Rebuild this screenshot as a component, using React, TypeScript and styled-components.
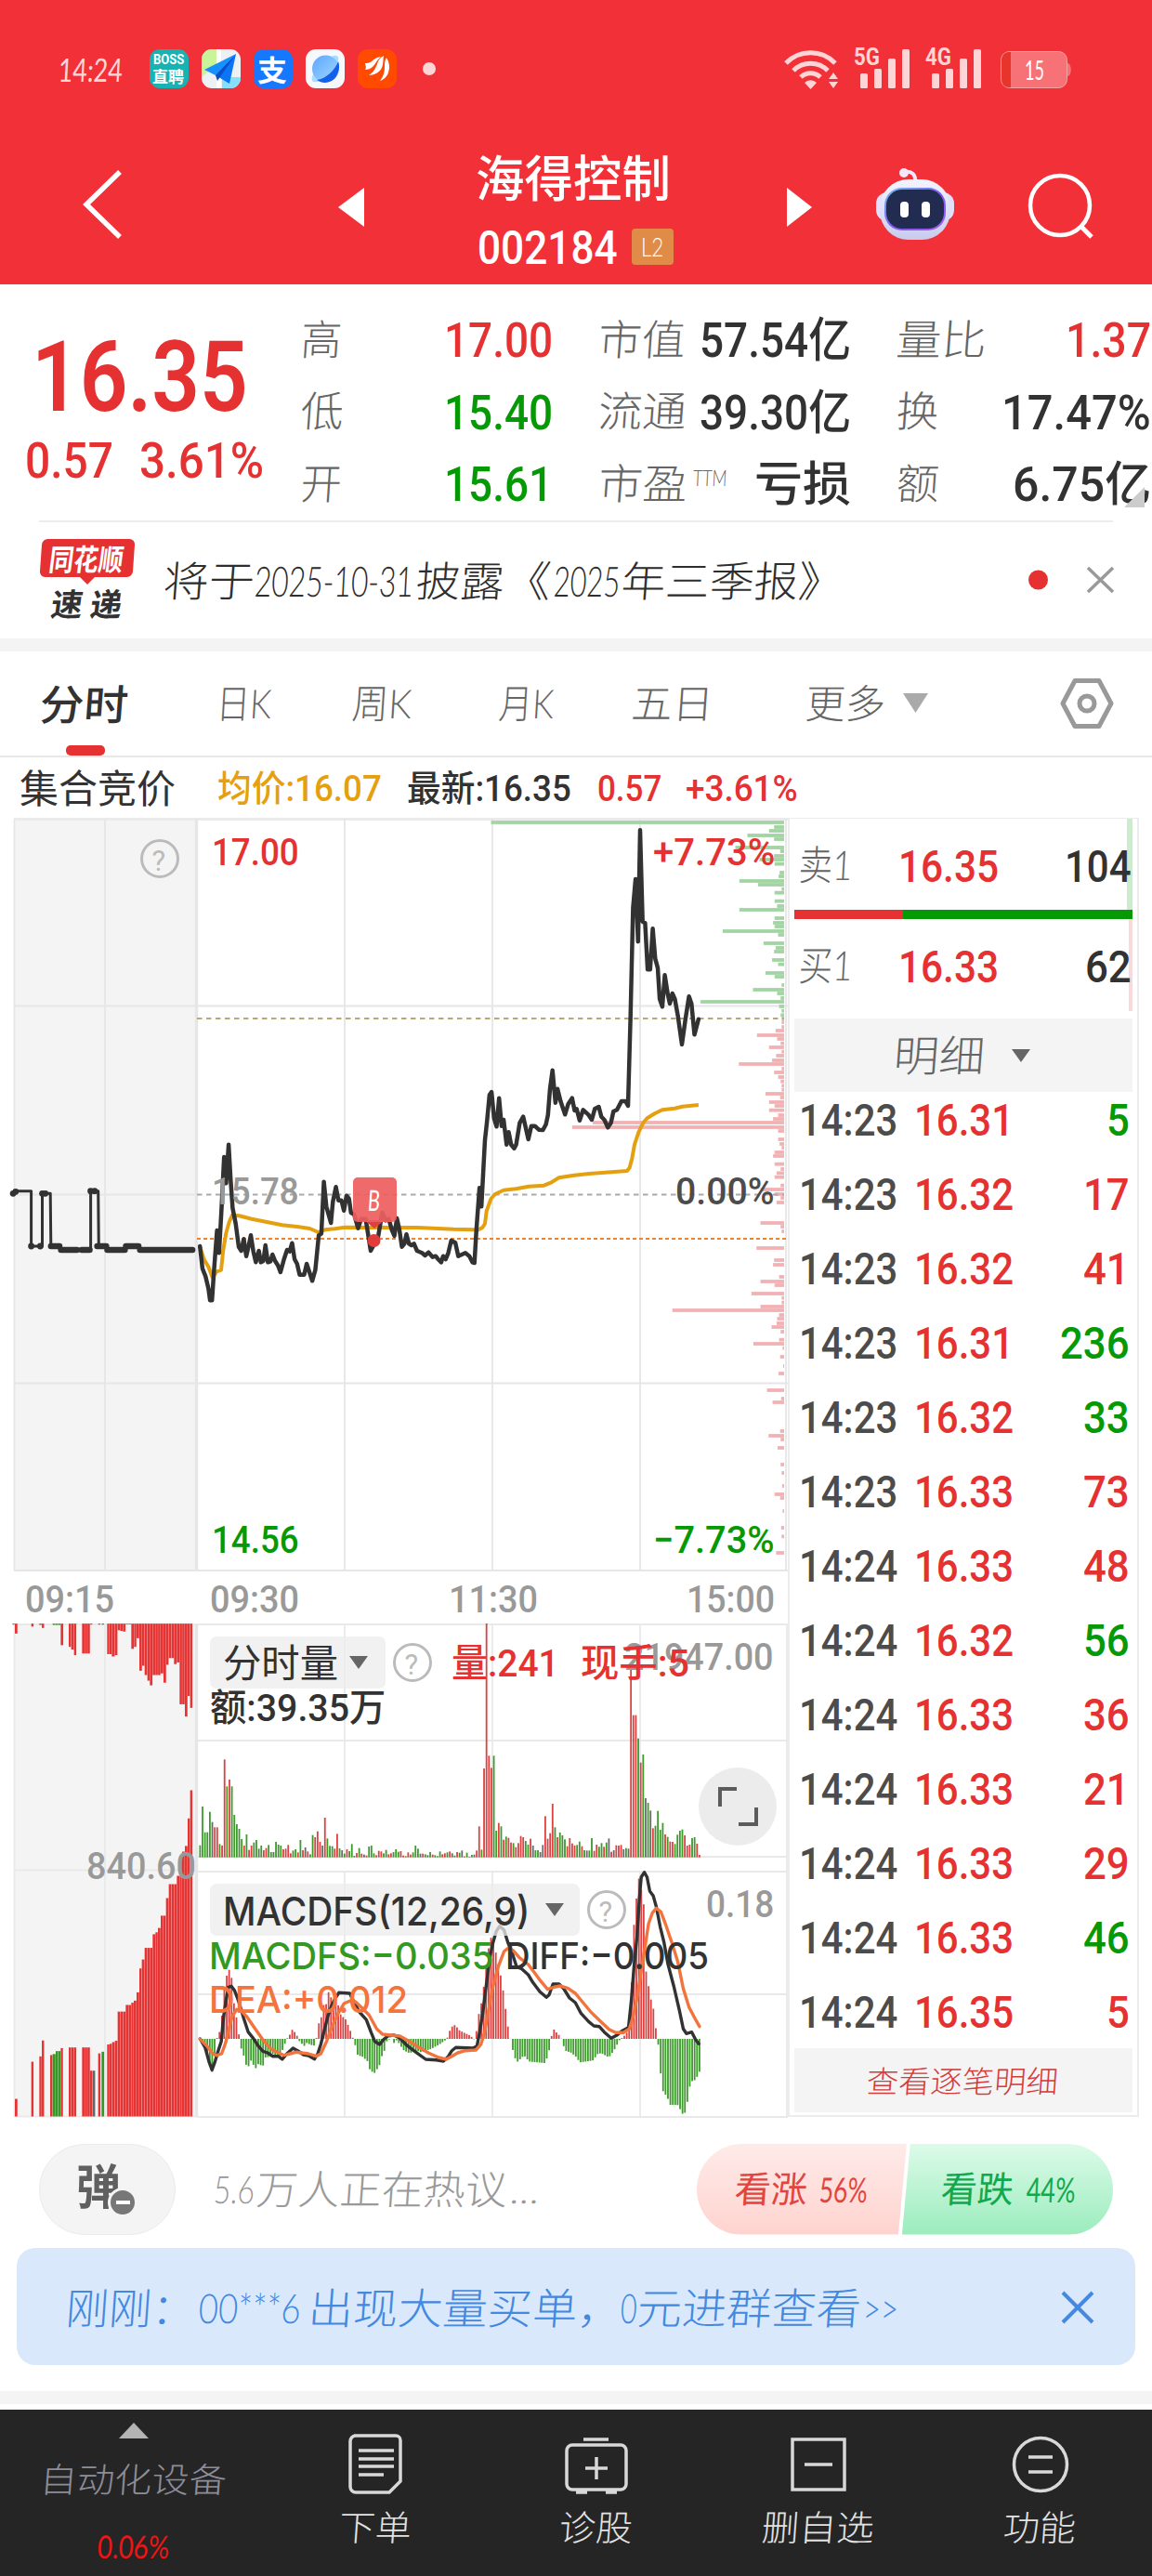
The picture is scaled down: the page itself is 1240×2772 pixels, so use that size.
import React, { useLayoutEffect, useRef } from "react";
import styled, { createGlobalStyle, css } from "styled-components";

const RED = "#e53131";
const GREEN = "#059905";
const INK = "#323232";
const GREY = "#999999";

const Global = createGlobalStyle`
  html, body { margin: 0; padding: 0; background: #fff; }
  * { box-sizing: border-box; }
  svg { display: block; flex: none; }
`;

const faces = {
  num: `Roboto, "Noto Sans CJK SC", sans-serif`,
  thin: `Lato, "Noto Sans CJK SC", sans-serif`,
  latin: `Inter, "Noto Sans CJK SC", sans-serif`,
};

/* ---------- text that is set to an exact measure ---------- */

type TextProps = {
  w: number;
  size: number;
  color?: string;
  weight?: number;
  face?: keyof typeof faces;
  ml?: number;
  slant?: number;
  children: React.ReactNode;
};

const Slot = styled.span<{ $w: number; $ml: number; $size: number; $color: string; $weight: number; $face: string }>`
  display: inline-block;
  flex: none;
  width: ${(p) => p.$w}px;
  margin-left: ${(p) => p.$ml}px;
  height: ${(p) => Math.round(p.$size * 1.2)}px;
  line-height: ${(p) => Math.round(p.$size * 1.2)}px;
  font-family: ${(p) => p.$face};
  font-size: ${(p) => p.$size}px;
  font-weight: ${(p) => p.$weight};
  color: ${(p) => p.$color};
  white-space: pre;
`;

const Ink = styled.span`
  display: inline-block;
  transform-origin: 0 50%;
`;

function Text({ w, size, color = INK, weight = 500, face = "num", ml = 0, slant = 0, children }: TextProps) {
  const ref = useRef<HTMLSpanElement>(null);
  const drop = face === "thin" ? 0 : size > 20 ? 1.5 : 0;
  useLayoutEffect(() => {
    const el = ref.current;
    if (!el) return;
    const fit = () => {
      if (el.offsetWidth) el.style.transform = `translate(-1px, ${drop}px) scaleX(${w / el.offsetWidth}) skewX(${-slant}deg)`;
    };
    fit();
    document.fonts?.ready.then(fit);
  }, [w, slant, drop, children]);
  return (
    <Slot $w={w} $ml={ml} $size={size} $color={color} $weight={weight} $face={faces[face]}>
      <Ink ref={ref}>{children}</Ink>
    </Slot>
  );
}

const Pen = (p: TextProps) => <Text weight={300} face="thin" color="#666" slant={4} {...p} />;

/* ---------- shell ---------- */

const Page = styled.main`
  width: 1240px;
  height: 2772px;
  overflow: hidden;
  display: flex;
  flex-direction: column;
  background: #fff;
`;

const Row = styled.div<{ $h: number; $pl?: number }>`
  display: flex;
  align-items: center;
  flex: none;
  height: ${(p) => p.$h}px;
  padding-left: ${(p) => p.$pl ?? 0}px;
`;

const Header = styled.header`
  height: 306px;
  flex: none;
  background: #f23037;
  border-bottom: 1px solid #c9484c;
`;

const Band = styled.div`
  height: 14px;
  flex: none;
  background: #f4f4f4;
`;

/* ---------- status bar ---------- */

const AppIcon = styled.span<{ $bg: string; $ml?: number }>`
  flex: none;
  width: 42px;
  height: 42px;
  margin-left: ${(p) => p.$ml ?? 14}px;
  border-radius: 11px;
  background: ${(p) => p.$bg};
  overflow: hidden;
  display: flex;
  flex-direction: column;
  align-items: center;
  justify-content: center;
`;

const Spacer = styled.span`
  flex: 1;
`;

const Dot = styled.span<{ $r: number; $color: string; $ml: number }>`
  flex: none;
  width: ${(p) => p.$r * 2}px;
  height: ${(p) => p.$r * 2}px;
  margin-left: ${(p) => p.$ml}px;
  border-radius: 50%;
  background: ${(p) => p.$color};
`;

function StatusBar() {
  const c = "#fdd5d6";
  return (
    <Row $h={148} $pl={64}>
      <Pen w={69} size={35} color={c} weight={400}>14:24</Pen>
      <AppIcon $bg="#17b3b3" $ml={28}>
        <Text w={33} size={15} color="#fff" weight={700}>BOSS</Text>
        <Text w={34} size={17} color="#fff" weight={700}>直聘</Text>
      </AppIcon>
      <AppIcon $bg="#eef1f3">
        <svg width="42" height="42" viewBox="0 0 42 42">
          <path d="M0 0H16V17L0 30Z" fill="#c8f59a" />
          <path d="M16 0h5v14l-5 3Z" fill="#fff" />
          <path d="M22 30H42V42H22Z" fill="#86e0fb" />
          <path d="M16 28h5v14h-5Z" fill="#fff" />
          <path d="M37 5 3 22l12 6Z" fill="#1590ff" />
          <path d="M37 5 15 28l15 9Z" fill="#0a75f5" />
          <path d="M37 5 15 28l2 6Z" fill="#0a4fc8" />
        </svg>
      </AppIcon>
      <AppIcon $bg="#1677ff">
        <Text w={32} size={31} color="#fff" weight={700}>支</Text>
      </AppIcon>
      <AppIcon $bg="#f6f8fb">
        <svg width="42" height="42" viewBox="0 0 42 42">
          <defs>
            <linearGradient id="orb" x1="0" y1="0" x2="1" y2="1">
              <stop offset="0" stopColor="#5fa4ff" />
              <stop offset="1" stopColor="#9fdcff" />
            </linearGradient>
          </defs>
          <ellipse cx="21" cy="21" rx="19" ry="7" transform="rotate(-45 21 21)" fill="#a9dcfb" />
          <circle cx="21.500" cy="21" r="14.500" fill="url(#orb)" />
          <path d="M35 13C32 22 22 32 12 33c8 6 19 2 22-6 2-4 3-9 1-14Z" fill="#1560ea" />
        </svg>
      </AppIcon>
      <AppIcon $bg="#ff4a00">
        <svg width="42" height="42" viewBox="0 0 42 42" fill="#fff">
          <path d="M8 15c5 0 7-2 11-5 2-1 4-2 6-2-4 3-5 7-8 10s-6 4-9 4c2-3 0-5 0-7Z" />
          <path d="M12 28c5-3 7-7 9-12 1-4 3-7 7-9-1 5 0 8-2 13-2 4-7 8-14 8Z" />
          <path d="M24 34c4-5 5-10 5-15 0-4 0-7 2-10 3 5 4 10 2 16-1 4-5 8-9 9Z" />
        </svg>
      </AppIcon>
      <Dot $r={7} $color={c} $ml={28} />
      <Spacer />
      <svg width="400" height="148" viewBox="840 0 400 148" fill={c}>
        <g fill="none" stroke={c} strokeWidth="5">
          <path d="M846 68a37 37 0 0 1 53 0" />
          <path d="M854 76a26 26 0 0 1 37 0" />
          <path d="M862 83a15 15 0 0 1 21 0" />
        </g>
        <path d="M866 89a9 9 0 0 1 13 0L872.500 96Z" />
        <path d="M892 85l5-7 5 7ZM892 88l5 7 5-7Z" />
        {[0, 77].map((dx) =>
          [16, 21, 32, 42].map((h, i) => (
            <rect key={dx + i} x={926 + dx + i * 15} y={95 - h} width="8" height={h} rx="1.500" />
          )),
        )}
        <g fontFamily="Roboto" fontWeight="700" fontSize="25">
          <text x="919" y="70" textLength="28" lengthAdjust="spacingAndGlyphs">5G</text>
          <text x="996" y="70" textLength="28" lengthAdjust="spacingAndGlyphs">4G</text>
        </g>
        <rect x="1077.500" y="55.500" width="71" height="39" rx="9" fill="#f77277" stroke="#f9a0a2" />
        <path d="M1088 56v38h-2c-5 0-8-4-8-9V65c0-5 3-9 8-9Z" fill="#e8352c" />
        <path d="M1149 68c5 0 5 14 0 14Z" fill="#f77277" />
        <text x="1103" y="86" fontFamily="Lato" fontWeight="400" fontSize="29" fill="#fff" textLength="21" lengthAdjust="spacingAndGlyphs">15</text>
      </svg>
    </Row>
  );
}

/* ---------- title bar ---------- */

const TitleBlock = styled.div`
  width: 212px;
  margin-left: 121px;
  padding-top: 3px;
  display: flex;
  flex-direction: column;
`;

const LevelTag = styled.span`
  width: 45px;
  height: 39px;
  margin-left: 14px;
  border-radius: 4px;
  background: #e08c48;
  display: flex;
  align-items: center;
  justify-content: center;
`;

function TitleBar() {
  return (
    <Row $h={157}>
      <svg width="392" height="157" viewBox="0 148 392 157">
        <path d="M129 185 93 220l36 35" fill="none" stroke="#fff" strokeWidth="5.500" />
        <path d="M392 202v42l-28-21Z" fill="#fff" />
      </svg>
      <TitleBlock>
        <Row $h={74}>
          <Text w={210} size={53} color="#fff" weight={500} face="latin">海得控制</Text>
        </Row>
        <Row $h={74}>
          <Text w={151} size={50} color="#fff" weight={500} ml={2}>002184</Text>
          <LevelTag>
            <Text w={24} size={28} color="#fff" weight={300} face="thin">L2</Text>
          </LevelTag>
        </Row>
      </TitleBlock>
      <Spacer />
      <svg width="400" height="157" viewBox="840 148 400 157">
        <defs>
          <linearGradient id="helm" x1="0" y1="0" x2="0" y2="1">
            <stop offset="0" stopColor="#f4f4ff" />
            <stop offset="1" stopColor="#c9cbee" />
          </linearGradient>
          <linearGradient id="visor" x1="0" y1="0" x2="1" y2="1">
            <stop offset="0" stopColor="#6fc3ee" />
            <stop offset=".5" stopColor="#7a5af0" />
            <stop offset="1" stopColor="#a55cf5" />
          </linearGradient>
        </defs>
        <path d="M847 202v42l27-21Z" fill="#fff" />
        <path d="M985 196c1-9-4-12-12-11" fill="none" stroke="#efeaff" strokeWidth="4" />
        <circle cx="973" cy="186" r="5" fill="#f2e8fa" />
        <rect x="943" y="207" width="84" height="31" rx="12" fill="#e3dffa" />
        <rect x="947" y="193" width="76" height="65" rx="31" fill="url(#helm)" />
        <rect x="952" y="202" width="66" height="46" rx="19" fill="url(#visor)" />
        <rect x="954" y="204" width="62" height="42" rx="17" fill="#222b50" />
        <rect x="969" y="217" width="9" height="17" rx="4" fill="#fff" />
        <rect x="992" y="217" width="9" height="17" rx="4" fill="#fff" />
        <circle cx="1141" cy="221" r="32" fill="none" stroke="#fff" strokeWidth="4.500" />
        <path d="M1163 243l12 12" stroke="#fff" strokeWidth="5" />
      </svg>
    </Row>
  );
}

/* ---------- quote ---------- */

const Quote = styled.section`
  position: relative;
  height: 254px;
  flex: none;
  padding-top: 20px;
  display: flex;
`;

const QuoteMain = styled.div`
  width: 325px;
  padding-top: 18px;
`;

const QuoteGrid = styled.div`
  display: grid;
  grid-template-columns: 271px 272px 274px;
  grid-auto-rows: 77.5px;
  column-gap: 49px;
`;

const Cell = styled.div`
  display: flex;
  align-items: center;
  justify-content: space-between;
`;

const Super = styled.span`
  display: flex;
  margin-bottom: 12px;
`;

const Corner = styled.span`
  position: absolute;
  right: 8px;
  bottom: 14px;
  border-left: 22px solid transparent;
  border-bottom: 22px solid #ccc;
`;

const Divider = styled.div`
  height: 2px;
  flex: none;
  margin: 0 42px;
  background: #ececec;
`;

const cells: [string, number, string, number, string][] = [
  ["高", 44, "17.00", 117, RED],
  ["市值", 94, "57.54亿", 163, INK],
  ["量比", 97, "1.37", 92, RED],
  ["低", 46, "15.40", 117, GREEN],
  ["流通", 95, "39.30亿", 163, INK],
  ["换", 46, "17.47%", 161, INK],
  ["开", 44, "15.61", 117, GREEN],
  ["市盈", 96, "亏损", 104, INK],
  ["额", 46, "6.75亿", 149, INK],
];

function QuotePanel() {
  return (
    <>
      <Quote>
        <QuoteMain>
          <Row $h={121} $pl={35}>
            <Text w={233} size={105} color={RED} weight={600}>16.35</Text>
          </Row>
          <Row $h={58} $pl={28}>
            <Text w={95} size={53} color={RED}>0.57</Text>
            <Text w={134} size={53} color={RED} ml={28}>3.61%</Text>
          </Row>
        </QuoteMain>
        <QuoteGrid>
          {cells.map(([k, kw, v, vw, c]) => (
            <Cell key={k}>
              <Pen w={kw} size={45}>{k}</Pen>
              {k === "市盈" && (
                <Super>
                  <Pen w={37} size={24} ml={-24}>TTM</Pen>
                </Super>
              )}
              <Text w={vw} size={51} color={c}>{v}</Text>
            </Cell>
          ))}
        </QuoteGrid>
        <Corner />
      </Quote>
      <Divider />
    </>
  );
}

/* ---------- news ---------- */

const NewsLogo = styled.div`
  width: 104px;
  height: 90px;
  display: flex;
  flex-direction: column;
  align-items: center;
`;

const LogoTop = styled.div`
  width: 100px;
  height: 43px;
  border-radius: 6px;
  background: ${RED};
  transform: skewX(-4deg);
  display: flex;
  align-items: center;
  justify-content: center;
`;

const LogoTip = styled.div`
  border: 8px solid transparent;
  border-top-color: ${RED};
  border-bottom: 0;
`;

function News() {
  const ink = "#2e2e2e";
  return (
    <Row $h={125} $pl={42}>
      <NewsLogo>
        <LogoTop>
          <Text w={80} size={32} color="#fff" weight={700} slant={4}>同花顺</Text>
        </LogoTop>
        <LogoTip />
        <Text w={76} size={34} weight={700} slant={8}>速 递</Text>
      </NewsLogo>
      <Pen w={98} size={45} ml={31} color={ink}>将于</Pen>
      <Pen w={171} size={45} color={ink}>2025-10-31</Pen>
      <Pen w={95} size={45} ml={3} color={ink}>披露</Pen>
      <Pen w={50} size={45} color={ink}>《</Pen>
      <Pen w={71} size={45} color={ink} ml={3}>2025</Pen>
      <Pen w={238} size={45} color={ink} ml={2}>年三季报》</Pen>
      <Spacer />
      <svg width="140" height="125" viewBox="1100 562 140 125">
        <circle cx="1117.500" cy="624" r="10.500" fill={RED} />
        <path d="M1171 611l27 26M1198 611l-27 26" stroke="#999" strokeWidth="3.500" />
      </svg>
    </Row>
  );
}

/* ---------- tabs ---------- */

const Tabs = styled.nav`
  height: 114px;
  flex: none;
  padding-left: 44px;
  display: flex;
  border-bottom: 2px solid #e8e8e8;
`;

const Tab = styled.div<{ $ml?: number; $on?: boolean }>`
  display: flex;
  flex-direction: column;
  align-items: center;
  justify-content: space-between;
  padding-top: 30px;
  margin-left: ${(p) => p.$ml ?? 0}px;
  ${(p) =>
    p.$on &&
    css`
      &::after {
        content: "";
        width: 42px;
        height: 11px;
        border-radius: 5px;
        background: ${RED};
      }
    `}
`;

function TabBar() {
  return (
    <Tabs>
      <Tab $on>
        <Text w={95} size={45} weight={500} face="thin" slant={4}>分时</Text>
      </Tab>
      <Tab $ml={95}><Pen w={59} size={43}>日K</Pen></Tab>
      <Tab $ml={87}><Pen w={64} size={43}>周K</Pen></Tab>
      <Tab $ml={94}><Pen w={59} size={43}>月K</Pen></Tab>
      <Tab $ml={84}><Pen w={88} size={43}>五日</Pen></Tab>
      <Tab $ml={99}><Pen w={86} size={43}>更多</Pen></Tab>
      <Spacer />
      <svg width="280" height="112" viewBox="960 701 280 112">
        <path d="M972 746h27l-13.500 21Z" fill="#aaa" />
        <path d="M1157 732.500h26l13 24.500-13 24.500h-26L1144 757Z" fill="none" stroke="#999" strokeWidth="5" strokeLinejoin="round" />
        <circle cx="1170" cy="757" r="8" fill="none" stroke="#999" strokeWidth="5" />
      </svg>
    </Tabs>
  );
}

const KX = 1 / 1.8447;
const px = (x: number) => x * KX;
const py = (y: number) => 860 + y / 3;
const toPath = (s: string, fx: (n: number) => number, fy: (n: number) => number) =>
  "M" +
  s
    .trim()
    .split(/\s+/)
    .map((p) => {
      const [x, y] = p.split(",").map(Number);
      return `${fx(x).toFixed(1)} ${fy(y).toFixed(1)}`;
    })
    .join("L");

const PRICE_AM = `397,303 402,375 408,400 414,440 417,478 421,478 425,380 431,252 435,325 440,180 445,15 449,100 454,-25 458,90 462,180 468,230 474,305 479,318 484,280 489,335 494,300 498,268 503,320 508,355 514,318 518,355 523,350 527,300 532,355 537,352 541,330 546,350 552,365 557,387 564,345 570,315 575,320 580,293 585,345 590,360 595,395 604,395 609,360 615,390 620,415 626,380 633,268 638,262 643,95 648,175 657,228 661,160 667,112 672,155 678,155 683,188 688,140 693,150 697,195 703,200 711,245 717,215 726,215 736,318 742,300 750,280 759,195 766,220 772,215 778,250 783,270 788,213 793,250 798,305 803,295 807,265 812,295 817,300 822,295 828,318 838,325 844,333 851,323 859,338 865,335 870,345 876,355 880,335 885,345 890,325 896,285 904,292 910,335 917,330 924,325 932,335 938,355 942,357 946,250 952,115 956,175 960,50 963,-40 967,-100 972,-185 976,-195 981,-110 986,-83 991,-175 996,-85 1000,-105 1006,-25 1010,-65 1015,-25 1021,-13 1025,-25 1032,-95 1039,-115 1049,-42 1055,-85 1062,-85 1070,-73 1078,-72 1084,-90 1088,-120 1092,-205 1097,-265 1103,-160 1107,-205 1113,-165 1122,-122 1128,-155 1136,-175 1141,-135 1145,-140 1151,-103 1158,-137 1168,-122 1175,-105 1181,-140 1189,-147 1194,-115 1200,-105 1207,-80 1213,-95 1218,-132 1225,-137 1234,-165 1242,-165 1247,-150 1252,-440 1257,-790 1262,-882 1267,-680 1271,-1040 1276,-745 1281,-740 1286,-590 1291,-590 1296,-722 1301,-625 1306,-595 1310,-495 1315,-470 1320,-572 1326,-510 1330,-480 1335,-513 1340,-495 1346,-440 1354,-348 1361,-430 1368,-503 1373,-480 1379,-380 1387,-430`;
const AVERAGE = `397,305 405,345 414,370 422,405 430,385 439,380 443,320 449,260 455,225 461,203 475,205 500,215 530,225 560,235 590,240 615,246 632,258 645,250 665,247 685,242 830,243 900,248 950,250 958,243 963,230 966,190 975,150 983,135 1000,122 1025,118 1050,110 1080,107 1095,97 1110,82 1140,74 1170,69 1245,60 1250,50 1255,20 1260,-25 1268,-65 1277,-95 1285,-110 1300,-125 1315,-137 1340,-142 1355,-148 1387,-153`;
const AUCTION = `26,133 31,125 62,125 62,303 84,303 84,133 100,133 101,303 120,303 122,315 180,315 180,125 195,125 196,303 211,303 213,315 248,315 248,303 277,303 280,315 383,315`;
const AUCTION_DOTS = `26,133 31,127 84,133 90,133 180,125 188,125 62,303 80,303`;
const AUCTION_HEAVY = ["101,303 118,303", "121,315 153,315", "162,315 178,315", "193,303 211,303", "213,315 248,315", "250,303 275,303", "278,315 382,315"];

const PROFILE_ASK = `75:975 90:1537 102:1527 117:1484 129:1537 156:1460 168:1549 183:1537 195:1508 209:1538 237:1548 249:1546 264:1468 276:1505 290:1552 302:1538 329:1538 345:1543 357:1468 384:1538 399:1535 411:1538 426:1435 438:1545 465:1516 480:1540 492:1537 519:1533 533:1545 561:1520 573:1538 600:1552 615:1495 627:1543 642:1550 654:1391 669:1547 683:1552 697:1550 708:1552`;
const PROFILE_BID = `720:1552 735:1552 747:1540 762:1503 774:1543 788:1550 801:1527 815:1552 828:1541 843:1533 855:1467 870:1552 882:1537 897:1545 911:1550 925:1552 938:1552 951:1520 963:1549 978:1527 990:1538 1004:1527 1020:1545 1032:1535 1044:1177 1059:1136 1071:1545 1098:1545 1113:1548 1125:1552 1140:1538 1152:1535 1178:1538 1194:1550 1207:1542 1220:1538 1247:1550 1260:1510 1275:1538 1287:1550 1302:1542 1368:1510 1380:1550 1395:1552 1449:1502 1488:1537 1503:1535 1542:1547 1557:1510 1569:1538 1596:1492 1610:1552 1625:1552 1638:1510 1650:1335 1665:1547 1677:1543 1692:1542 1704:1532 1719:1550 1745:1547 1758:1496 1772:1554 1800:1549 1830:1555 1854:1546 1908:1523 1935:1551 1947:1534 2040:1549 2055:1526 2067:1550 2094:1544 2148:1550 2175:1552 2217:1553 2244:1538 2256:1549 2298:1554 2352:1551 2380:1552 2433:1541`;

const VOLUME = `767g 642g 725g 725g 659g 692k 709r 709r 763g 768r 490r 577g 555r 577g 669g 699g 714g 747g 768r 732g 782r 768r 758g 750g 778k 768g 783r 776r 766g 789g 789k 756g 765g 768g 780r 778r 766r 793r 784g 780g 790r 750g 783r 774k 787r 796g 734g 741r 722r 756r 768k 678r 745g 769g 770g 778r 730r 777g 783k 794g 780r 786g 763g 801g 792r 776g 794r 797k 800r 771g 768g 793g 799r 785r 787r 793g 782g 796r 793r 789g 780g 788g 786r 800r 802g 790r 797r 790g 768g 778g 794k 794r 796g 799k 789g 797r 799g 802g 787g 796r 793r 790g 787r 793k 800g 789r 791g 784k 803r 791g 804k 798g 797k 784r 706r 781g 519r 50r 478r 517r 478g 720g 695r 706g 749r 739g 743r 758r 760g 773r 760r 737r 741r 753g 765g 746r 768k 783g 783g 789k 766k 673r 746r 728r 633r 709g 741r 726g 735g 748g 770r 744r 761r 768r 766g 755g 770r 783g 784k 784g 744g 785r 765r 772g 760g 772r 758g 745k 788r 783k 767r 768r 766r 780k 776g 778k 200r 347r 347r 422g 500r 474g 615k 630g 655k 712r 704g 656g 717g 695g 732r 740g 755r 756r 763g 733g 720g 716g 735r 768r 765r 744g 741g 762r 798r`;

const HIST = `37,553 43,560 49,575 56,600 62,640 68,662 74,615 80,552 87,532 93,485 99,400 105,352 112,328 118,345 124,430 131,480 137,535 141,552 144,585 150,605 156,635 162,643 168,620 181,648 187,633 200,640 206,612 219,610 225,600 231,610 244,612 250,590 262,552 269,540 277,520 290,545 295,560 307,575 313,565 332,575 338,555 344,505 352,480 358,440 365,440 371,395 377,420 384,430 396,445 402,475 415,490 428,530 434,552 440,575 446,605 459,610 472,625 478,655 490,662 503,635 509,605 515,590 522,555 535,552 541,568 547,555 560,580 566,590 580,598 600,590 610,595 622,590 635,585 660,568 674,555 680,545 687,515 698,507 710,525 735,540 746,550 750,560 756,505 763,445 769,430 775,350 782,300 788,220 800,240 807,300 813,320 820,375 826,420 832,490 838,530 843,560 850,600 858,628 865,620 877,605 890,625 930,630 940,605 946,560 952,518 960,530 972,545 977,565 984,590 1000,597 1012,610 1022,628 1055,622 1070,598 1080,600 1097,612 1110,590 1125,555 1135,545 1148,525 1155,400 1161,200 1168,105 1174,30 1187,105 1193,330 1205,420 1212,450 1220,530 1225,570 1231,660 1237,720 1243,730 1250,745 1256,765 1275,765 1287,790 1290,802 1298,780 1304,720 1310,690 1320,685 1327,672 1333,655`;
const DIFF = `37,552 50,580 60,625 68,652 76,625 84,590 92,560 98,480 104,430 110,385 118,382 126,395 134,420 142,450 150,485 162,530 175,550 188,575 200,592 212,597 225,608 240,608 250,618 262,600 278,582 290,590 305,603 318,606 334,617 342,600 350,570 358,530 368,480 378,445 388,420 397,403 425,405 435,430 450,465 468,490 480,530 490,560 503,570 512,555 525,542 540,540 555,550 575,575 600,598 622,618 650,620 668,624 680,610 690,590 700,580 745,582 755,575 762,530 770,470 780,370 788,290 797,240 805,205 814,188 825,200 835,240 845,270 858,320 870,325 888,345 900,370 918,400 935,418 942,410 952,375 968,375 980,390 995,420 1010,435 1025,470 1045,497 1058,510 1072,512 1085,530 1103,550 1118,540 1130,527 1148,515 1155,430 1162,320 1170,220 1176,100 1181,30 1189,14 1196,30 1203,75 1212,90 1220,125 1230,190 1240,240 1250,310 1265,380 1280,460 1290,520 1298,535 1312,530 1322,555 1330,568`;
const DEA = `37,553 55,575 70,600 80,605 93,600 103,565 112,520 120,480 132,457 142,460 158,480 180,520 200,555 220,583 240,597 255,605 270,600 285,595 300,597 318,600 338,608 350,600 365,560 380,510 395,470 410,438 425,430 440,432 455,450 475,475 495,520 510,537 530,540 555,543 580,560 605,580 630,598 655,612 675,618 690,608 705,597 725,590 752,588 765,570 775,530 785,460 795,390 810,320 825,270 837,258 850,268 865,290 888,312 905,340 920,365 938,392 955,385 970,381 990,388 1010,405 1030,435 1050,465 1075,495 1098,522 1115,532 1135,532 1150,520 1160,480 1170,420 1180,340 1190,260 1200,180 1210,145 1220,130 1232,142 1245,185 1260,240 1275,300 1290,390 1305,450 1320,485 1332,512`;

/* from-to:level colour */
const UNMATCHED = `40-48:51g 48-57:78r 101-109:57r 127-135:52r 135-143:61r 170-196:52g 196-205:113r 222-230:118r 230-239:126r 239-247:143r 265-291:138r 291-299:51r 317-325:51r 328-337:51g 346-361:140r 361-371:147r 371-380:143r 380-388:68r 388-397:70r 397-406:72r 406-424:50r 424-433:124r 433-441:118r 441-450:92r 450-459:190r 459-467:175r 467-476:203r 476-484:220r 484-493:234r 493-519:203r 519-528:198r 528-537:226r 537-545:172r 545-562:152r 562-571:170r 571-580:165r 580-597:291r 597-606:328r 606-614:266r 614-622:302r`;
const MATCHED = `48-57:1480r 101-109:1368r 127-135:1352r 135-143:1304r 162-170:1348r 170-180:1345g 180-196:1336g 196-204:1327r 222-247:1325r 265-291:1325r 291-299:1395r 299-308:1395k 317-325:1343r 328-337:1338g 346-354:1316r 354-362:1314r 362-371:1309r 371-380:1305r 380-406:1217r 406-424:1197r 424-432:1190r 432-441:1184r 441-450:1159r 450-458:1087r 458-467:1060r 467-493:1025r 493-502:984r 502-510:978r 510-519:965r 519-536:928r 536-545:875r 545-571:833r 571-580:808r 580-588:760r 588-597:735r 597-606:718r 606-614:635r 614-622:550r`;

const TONES: Record<string, string> = { r: "#dd4242", g: "#3c9b2a", k: "#6a6a6a" };
const SOLID: Record<string, string> = { r: "#e63333", g: "#339922", k: "#666" };

const pairs = (s: string) => s.split(" ").map((p) => p.split(":").map(Number));

/* ---------- chart ---------- */

const Board = styled.section`
  height: 1412px;
  flex: none;
  display: flex;
`;

const ChartColumn = styled.div`
  width: 848px;
  flex: none;
`;

const Plot = styled.div`
  position: relative;
`;

const Over = styled.div<{ $x: number; $y: number }>`
  position: absolute;
  left: ${(p) => p.$x}px;
  top: ${(p) => p.$y}px;
  transform: translateY(-50%);
  display: flex;
  align-items: center;
`;

const Pill = styled(Over)<{ $w: number }>`
  width: ${(p) => p.$w}px;
  height: 56px;
  padding-left: 15px;
  border-radius: 7px;
  background: rgba(236, 236, 236, 0.75);
`;

const Caret = styled.span<{ $ml: number; $s?: number }>`
  margin-left: ${(p) => p.$ml}px;
  border: ${(p) => p.$s ?? 10}px solid transparent;
  border-top: ${(p) => (p.$s ?? 10) + 4}px solid #666;
  border-bottom: 0;
`;

const HelpRing = styled(Over)`
  width: 42px;
  height: 42px;
  border: 3px solid #bbb;
  border-radius: 50%;
  justify-content: center;
`;

const Help = ({ x, y }: { x: number; y: number }) => (
  <HelpRing $x={x} $y={y}>
    <Text w={15} size={31} color="#bbb" weight={400}>?</Text>
  </HelpRing>
);

const FullBtn = styled(Over)`
  width: 84px;
  height: 84px;
  border-radius: 50%;
  background: #ececec;
`;

const Marker = styled(Over)`
  width: 47px;
  height: 48px;
  border-radius: 5px;
  background: rgba(238, 94, 94, 0.92);
  justify-content: center;
`;

function PriceChart() {
  const z = (n: number) => py(n + 1140);
  return (
    <Plot>
      <svg width="848" height="811" viewBox="0 880 848 811">
        <rect x="15" y="881" width="197" height="809" fill="#f4f4f4" />
        <g stroke="#e6e6e6" strokeWidth="2">
          <path d="M15 881.500H848" stroke="#ebebeb" strokeWidth="3" />
          <path d="M15 1082.500H848M15 1285.500H212M15 1488.500H848M15 1690H848M15.500 881V1690M113 881V1690M371 881V1690M530 881V1690M689 881V1690M846 881V1690" strokeWidth="1.800" />
          <path d="M211.500 881V1690" strokeWidth="3.500" />
        </g>
        <g fill="#a3d5a4">
          {pairs(PROFILE_ASK).map(([y, x]) => (
            <rect key={y} x={px(x)} y={py(y) - 1.900} width={844 - px(x)} height="3.800" />
          ))}
        </g>
        <g fill="#f2b2b4">
          {pairs(PROFILE_BID).map(([y, x]) => (
            <rect key={y} x={px(x)} y={py(y) - 1.900} width={844 - px(x)} height="3.800" />
          ))}
        </g>
        <path d="M212 1096H844" stroke="#b9a67c" strokeWidth="2" strokeDasharray="5.500 4.500" />
        <path d="M212 1285.500H844" stroke="#aaa" strokeWidth="2" strokeDasharray="5.500 4.500" />
        <path d="M212 1333H848" stroke="#f0822c" strokeWidth="2.200" strokeDasharray="4 3" />
        <g fill="none" strokeLinejoin="round">
          <path d={toPath(AVERAGE, px, z)} stroke="#e5a00f" strokeWidth="4" />
          <path d={toPath(PRICE_AM, px, z)} stroke={INK} strokeWidth="4.500" strokeLinecap="round" />
          <path d={toPath(AUCTION, px, z)} stroke={INK} strokeWidth="3" />
          {AUCTION_HEAVY.map((s) => (
            <path key={s} d={toPath(s, px, z)} stroke={INK} strokeWidth="6.500" strokeLinecap="round" />
          ))}
        </g>
        {AUCTION_DOTS.split(" ").map((d) => {
          const [x, y] = d.split(",").map(Number);
          return <circle key={d} cx={px(x)} cy={z(y)} r="3.400" fill={INK} />;
        })}
        <path d="M392 1313h22l-11 9Z" fill="#e04040" />
        <circle cx="402.500" cy="1335" r="7" fill="#e23b3b" />
      </svg>
      <Help x={151} y={44} />
      <Over $x={229} $y={36}><Text w={94} size={41} color={RED}>17.00</Text></Over>
      <Over $x={704} $y={36}><Text w={131} size={41} color={RED}>+7.73%</Text></Over>
      <Over $x={229} $y={401}><Text w={94} size={41} color={GREY}>15.78</Text></Over>
      <Over $x={728} $y={401}><Text w={107} size={41} color="#4c4c4c">0.00%</Text></Over>
      <Over $x={229} $y={776}><Text w={94} size={41} color={GREEN}>14.56</Text></Over>
      <Over $x={704} $y={776}><Text w={131} size={41} color={GREEN}>−7.73%</Text></Over>
      <Marker $x={380} $y={411}>
        <Text w={13} size={31} color="#fff" weight={400} face="thin" slant={6}>B</Text>
      </Marker>
    </Plot>
  );
}

function LowerCharts() {
  const qx = (x: number) => 200 + x / 2.409;
  const vy = (y: number) => 1730 + y / 3;
  const my = (y: number) => 2010 + y / 3;
  const ly = (y: number) => 1730 + y / 2.8;
  const hist = HIST.split(" ").map((p) => p.split(",").map(Number));
  const bars = Array.from({ length: 207 }, (_, i) => {
    const x = 37 + i * 6.286;
    let k = hist.findIndex((h) => h[0] > x);
    if (k < 1) k = hist.length - 1;
    const [a, b] = [hist[k - 1], hist[k]];
    return [x, a[1] + ((b[1] - a[1]) * (x - a[0])) / (b[0] - a[0])];
  });
  const vol = VOLUME.split(" ");
  const block = (s: string, base: number) =>
    s.split(" ").flatMap((b) => {
      const m = b.match(/(\d+)-(\d+):(\d+)(\w)/)!;
      const [x0, x1, v] = [+m[1], +m[2], +m[3]];
      const n = Math.max(1, Math.round((x1 - x0) / 8.7));
      const w = (x1 - x0) / n / 3;
      const y0 = ly(Math.min(base, v));
      const y1 = ly(Math.max(base, v));
      return Array.from({ length: n }, (_, i) => (
        <rect key={b + i} x={x0 / 3 + i * w} y={y0} width={w - 0.25} height={y1 - y0} fill={SOLID[m[4]]} />
      ));
    });
  return (
    <Plot>
      <svg width="848" height="533" viewBox="0 1747 848 533">
        <rect x="15" y="1748" width="197" height="530" fill="#f4f4f4" />
        <path
          d="M15 1748H848M212 1873H848M212 1998H848M212 2014H848M212 2146H848M212 2278H848M15 2012.500H212M15 2277.500H212M15.500 1748V2278M113 1748V2278M371 1748V1998M530 1748V1998M689 1748V1998M371 2014V2278M530 2014V2278M689 2014V2278M847 1748V2278"
          stroke="#e9e9e9"
          strokeWidth="1.800"
        />
        <path d="M211.500 1748V2278" stroke="#e6e6e6" strokeWidth="3.500" />
        {block(UNMATCHED, 48)}
        {block(MATCHED, 1533)}
        {vol.map((v, i) => {
          const y = vy(parseInt(v, 10));
          return <rect key={i} x={qx(37 + (i * 1295) / (vol.length - 1)) - 0.9} y={y} width="1.800" height={1998.700 - y} fill={TONES[v.slice(-1)]} />;
        })}
        {bars.map(([x, y]) => (
          <rect key={x} x={qx(x) - 0.9} y={Math.min(my(y), 2194)} width="1.800" height={Math.abs(my(y) - 2194)} fill={y < 552 ? TONES.r : TONES.g} />
        ))}
        <g fill="none" strokeWidth="3.400" strokeLinejoin="round" strokeLinecap="round">
          <path d={toPath(DIFF, qx, my)} stroke={INK} />
          <path d={toPath(DEA, qx, my)} stroke="#f2733c" />
        </g>
      </svg>
      <Over $x={94} $y={260}><Text w={118} size={41} color={GREY}>840.60</Text></Over>
      <Over $x={673} $y={35}><Text w={161} size={41} color={GREY}>21947.00</Text></Over>
      <Pill $x={226} $y={42} $w={189}>
        <Text w={124} size={42} weight={400}>分时量</Text>
        <Caret $ml={11} />
      </Pill>
      <Help x={423} y={42} />
      <Over $x={487} $y={42}>
        <Text w={116} size={41} color={RED}>量:241</Text>
        <Text w={117} size={41} color={RED} ml={23}>现手:5</Text>
      </Over>
      <Over $x={227} $y={90}><Text w={189} size={41}>额:39.35万</Text></Over>
      <FullBtn $x={752} $y={197}>
        <svg width="84" height="84" viewBox="0 0 84 84" fill="none" stroke="#5c5c5c" strokeWidth="4">
          <path d="M23 42V23H41M43 61H62V43" />
        </svg>
      </FullBtn>
      <Pill $x={226} $y={308} $w={398}>
        <Text w={330} size={42} face="latin">MACDFS(12,26,9)</Text>
        <Caret $ml={16} />
      </Pill>
      <Help x={632} y={308} />
      <Over $x={761} $y={301}><Text w={73} size={41} color={GREY}>0.18</Text></Over>
      <Over $x={226} $y={356}>
        <Text w={306} size={40} face="latin" color="#339922">MACDFS:−0.035</Text>
        <Text w={219} size={40} face="latin" ml={13}>DIFF:−0.005</Text>
      </Over>
      <Over $x={226} $y={403}><Text w={214} size={40} face="latin" color="#f5733d">DEA:+0.012</Text></Over>
    </Plot>
  );
}

/* ---------- order book ---------- */

const Book = styled.aside`
  position: relative;
  width: 378px;
  height: 1398px;
  border: 2px solid #ececec;
  border-top-width: 1px;
  padding: 0 5px;
`;

const Depth = styled(Row)<{ $bar: string; $bw: number }>`
  padding-left: 6px;
  background: linear-gradient(${(p) => p.$bar}, ${(p) => p.$bar}) right / ${(p) => p.$bw}px 100% no-repeat;
`;

const Ratio = styled.div`
  height: 10px;
  background: linear-gradient(90deg, ${RED} 32.2%, ${GREEN} 32.2%);
`;

const DetailHead = styled.div`
  height: 79px;
  margin-top: 8px;
  padding-left: 108px;
  display: flex;
  align-items: center;
  background: #f4f4f4;
`;

const Tick = styled.div`
  height: 80px;
  padding: 0 2px 0 6px;
  display: grid;
  grid-template-columns: 124px 1fr auto;
  align-items: center;
`;

const Ticks = styled.div`
  margin-top: -12px;
  margin-bottom: 1px;
`;

const MoreLink = styled.div`
  height: 69px;
  margin-top: 1px;
  display: flex;
  align-items: center;
  justify-content: center;
  background: #f4f4f4;
`;

const ticks: [string, string, string, boolean][] = [
  ["14:23", "16.31", "5", false],
  ["14:23", "16.32", "17", true],
  ["14:23", "16.32", "41", true],
  ["14:23", "16.31", "236", false],
  ["14:23", "16.32", "33", false],
  ["14:23", "16.33", "73", true],
  ["14:24", "16.33", "48", true],
  ["14:24", "16.32", "56", false],
  ["14:24", "16.33", "36", true],
  ["14:24", "16.33", "21", true],
  ["14:24", "16.33", "29", true],
  ["14:24", "16.33", "46", false],
  ["14:24", "16.35", "5", true],
];

function OrderBook() {
  return (
    <Book>
      <Depth $h={98} $bar="#cdebcd" $bw={6}>
        <Pen w={58} size={44}>卖1</Pen>
        <Text w={108} size={49} color={RED} ml={49}>16.35</Text>
        <Spacer />
        <Text w={72} size={49}>104</Text>
      </Depth>
      <Ratio />
      <Depth $h={99} $bar="#f9dada" $bw={4}>
        <Pen w={58} size={44}>买1</Pen>
        <Text w={108} size={49} color={RED} ml={49}>16.33</Text>
        <Spacer />
        <Text w={50} size={49}>62</Text>
      </Depth>
      <DetailHead>
        <Pen w={98} size={46}>明细</Pen>
        <Caret $ml={28} />
      </DetailHead>
      <Ticks>
        {ticks.map(([t, p, q, up], i) => (
          <Tick key={i}>
            <Text w={106} size={49} color="#4c4c4c">{t}</Text>
            <Text w={107} size={49} color={RED}>{p}</Text>
            <Text w={q.length * 25} size={49} color={up ? RED : GREEN}>{q}</Text>
          </Tick>
        ))}
      </Ticks>
      <MoreLink>
        <Pen w={206} size={33} color="#d43c3c">查看逐笔明细</Pen>
      </MoreLink>
    </Book>
  );
}

/* ---------- discussion and notice ---------- */

const Chip = styled.div`
  width: 147px;
  height: 98px;
  border: 1px solid #ebebeb;
  border-radius: 49px;
  background: #f4f4f4;
  display: flex;
  align-items: center;
  padding: 0 0 6px 40px;
  position: relative;
`;

const MinusBadge = styled.span`
  position: absolute;
  left: 73px;
  top: 46px;
  width: 32px;
  height: 32px;
  border: 3px solid #f4f4f4;
  border-radius: 50%;
  background: #777;
  display: flex;
  align-items: center;
  justify-content: center;
  &::after {
    content: "";
    width: 15px;
    height: 4px;
    background: #fff;
  }
`;

const Vote = styled.div`
  position: relative;
  width: 448px;
  height: 98px;
  margin-right: 42px;
  display: flex;
  border-radius: 49px;
  overflow: hidden;
`;

const Side = styled.div<{ $up?: boolean }>`
  height: 98px;
  display: flex;
  align-items: center;
  ${(p) =>
    p.$up
      ? css`
          width: 226px;
          padding-left: 42px;
          background: linear-gradient(#feebe9, #ffd3cf);
          clip-path: polygon(0 0, 100% 0, 96% 100%, 0 100%);
        `
      : css`
          width: 228px;
          margin-left: -6px;
          padding-left: 44px;
          background: linear-gradient(#dcfbe9, #9becbd);
          clip-path: polygon(4.300% 0, 100% 0, 100% 100%, 0.400% 100%);
        `}
`;

const Notice = styled.div`
  height: 126px;
  flex: none;
  margin: 0 18px;
  padding: 2px 0 0 54px;
  border-radius: 20px;
  background: #dae8fb;
  display: flex;
  align-items: center;
`;

const Gap = styled.div<{ $h: number }>`
  height: ${(p) => p.$h}px;
  flex: none;
`;

/* ---------- bottom navigation ---------- */

const Nav = styled.nav`
  height: 179px;
  flex: none;
  background: #252525;
  display: flex;
`;

const IndexItem = styled.div`
  width: 288px;
  padding-top: 14px;
  display: flex;
  flex-direction: column;
  align-items: center;
  gap: 22px;
`;

const IndexChange = styled.div`
  padding-top: 7px;
`;

const UpCaret = styled.span`
  border: 16px solid transparent;
  border-bottom: 17px solid #b4b4b4;
  border-top: 0;
`;

const NavItem = styled.div<{ $ml: number; $w: number }>`
  width: ${(p) => p.$w}px;
  margin-left: ${(p) => p.$ml}px;
  padding-top: 23px;
  display: flex;
  flex-direction: column;
  align-items: center;
  gap: 8px;
`;

const NavSvg = ({ children }: { children: React.ReactNode }) => (
  <svg width="72" height="72" viewBox="0 0 72 72" fill="none" stroke="#d8d8d8" strokeWidth="3.500">
    {children}
  </svg>
);

export default function App() {
  const blue = "#4389df";
  return (
    <>
      <Global />
      <Page>
        <Header>
          <StatusBar />
          <TitleBar />
        </Header>
        <QuotePanel />
        <News />
        <Band />
        <TabBar />
        <Row $h={65} $pl={22}>
          <Text w={168} size={42} weight={400}>集合竞价</Text>
          <Text w={177} size={39} color="#e5a00f" ml={45}>均价:16.07</Text>
          <Text w={177} size={39} ml={27}>最新:16.35</Text>
          <Text w={69} size={39} color={RED} ml={28}>0.57</Text>
          <Text w={121} size={39} color={RED} ml={26}>+3.61%</Text>
        </Row>
        <Board>
          <ChartColumn>
            <PriceChart />
            <Row $h={56} $pl={28}>
              <Text w={96} size={41} color={GREY}>09:15</Text>
              <Text w={96} size={41} color={GREY} ml={103}>09:30</Text>
              <Text w={96} size={41} color={GREY} ml={161}>11:30</Text>
              <Text w={95} size={41} color={GREY} ml={160}>15:00</Text>
            </Row>
            <LowerCharts />
          </ChartColumn>
          <OrderBook />
        </Board>
        <Row $h={127} $pl={42}>
          <Chip>
            <Text w={48} size={51} color="#606060" weight={700}>弹</Text>
            <MinusBadge />
          </Chip>
          <Pen w={44} size={41} color={GREY} ml={42}>5.6</Pen>
          <Pen w={270} size={43} color={GREY} ml={2}>万人正在热议</Pen>
          <Pen w={32} size={41} color={GREY} ml={3}>...</Pen>
          <Spacer />
          <Vote>
            <Side $up>
              <Text w={78} size={39} color="#e2453f" weight={400} face="thin" slant={4}>看涨</Text>
              <Text w={52} size={37} color="#e2453f" weight={400} face="thin" slant={4} ml={13}>56%</Text>
            </Side>
            <Side>
              <Text w={78} size={39} color="#12a850" weight={400} face="thin" slant={4}>看跌</Text>
              <Text w={53} size={37} color="#12a850" weight={400} face="thin" slant={4} ml={14}>44%</Text>
            </Side>
          </Vote>
        </Row>
        <Notice>
          <Pen w={139} size={46} color={blue}>刚刚：</Pen>
          <Pen w={110} size={44} color={blue} ml={4}>00***6</Pen>
          <Pen w={338} size={46} color={blue} ml={8}>出现大量买单，</Pen>
          <Pen w={18} size={44} color={blue} ml={-2}>0</Pen>
          <Pen w={241} size={46} color={blue}>元进群查看</Pen>
          <Pen w={38} size={44} color={blue} ml={2}>&gt;&gt;</Pen>
          <Spacer />
          <svg width="80" height="40" viewBox="1142 2462 80 40">
            <path d="M1144 2466l32 32M1176 2466l-32 32" stroke={blue} strokeWidth="4" />
          </svg>
        </Notice>
        <Gap $h={28} />
        <Band />
        <Gap $h={6} />
        <Nav>
          <IndexItem>
            <UpCaret />
            <Pen w={201} size={37} color="#8d8d99">自动化设备</Pen>
            <IndexChange>
              <Pen w={77} size={34} color="#f01414" weight={400}>0.06%</Pen>
            </IndexChange>
          </IndexItem>
          <NavItem $ml={37} $w={160}>
            <NavSvg>
              <path d="M12 5h45a5 5 0 0 1 5 5v44l-12 12H14a6 6 0 0 1-6-6V11a6 6 0 0 1 6-6ZM17 21h38M17 30h38M17 38h38M17 47h27" />
            </NavSvg>
            <Pen w={78} size={38} color="#e2e2e2">下单</Pen>
          </NavItem>
          <NavItem $ml={77} $w={160}>
            <NavSvg>
              <path d="M22 9h27M10 15h52a6 6 0 0 1 6 6v36a6 6 0 0 1-6 6H10a6 6 0 0 1-6-6V21a6 6 0 0 1 6-6ZM36 28v24M24 40h24M14 66h12M46 66h12" />
            </NavSvg>
            <Pen w={79} size={38} color="#e2e2e2">诊股</Pen>
          </NavItem>
          <NavItem $ml={79} $w={160}>
            <NavSvg>
              <path d="M8 9h56v54H8ZM21 36h30" />
            </NavSvg>
            <Pen w={121} size={38} color="#e2e2e2">删自选</Pen>
          </NavItem>
          <NavItem $ml={79} $w={160}>
            <NavSvg>
              <circle cx="36" cy="36" r="28.500" />
              <path d="M23 28h26M23 44h26" />
            </NavSvg>
            <Pen w={78} size={38} color="#e2e2e2">功能</Pen>
          </NavItem>
        </Nav>
      </Page>
    </>
  );
}
